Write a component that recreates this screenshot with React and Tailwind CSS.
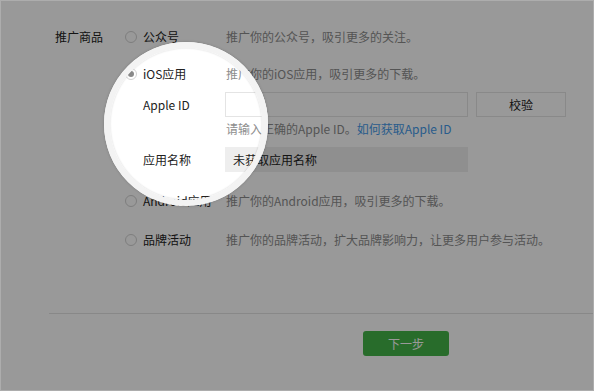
import React from "react";

function Radio({ checked }) {
  return (
    <span className="flex h-[12px] w-[12px] shrink-0 items-center justify-center rounded-full border border-[#d2d2d2] bg-white">
      {checked && <span className="h-[6px] w-[6px] rounded-full bg-[#8a8a8a]" />}
    </span>
  );
}

function OptionRow({ label, name, desc, checked, className = "" }) {
  return (
    <div className={`flex h-[18px] items-center ${className}`}>
      <span className="w-[70px] shrink-0">{label}</span>
      <Radio checked={checked} />
      <span className="ml-[6px] w-[83px] shrink-0">{name}</span>
      <span className="text-[#8d8d8d]">{desc}</span>
    </div>
  );
}

function Form() {
  return (
    <div className="h-[391px] w-[594px] bg-white font-['Noto_Sans_CJK_SC','Noto_Sans',sans-serif] text-[12px] leading-[18px] text-[#222]">
      <div className="pt-[28px] pl-[55px]">
        <OptionRow label="推广商品" name="公众号" desc="推广你的公众号，吸引更多的关注。" />
        <OptionRow className="mt-[19px]" checked name="iOS应用" desc="推广你的iOS应用，吸引更多的下载。" />
        <div className="mt-[9px] flex h-[25px] items-center pl-[88px]">
          <span className="w-[82px] shrink-0">Apple ID</span>
          <div className="h-[25px] w-[243px] shrink-0 border border-[#e4e4e4] bg-white" />
          <div className="ml-[8px] flex h-[25px] w-[90px] shrink-0 items-center justify-center border border-[#e4e4e4] bg-white">
            校验
          </div>
        </div>
        <div className="mt-[3px] h-[18px] pl-[171px] text-[#8d8d8d]">
          请输入正确的Apple ID。<span className="text-[#459ae9]">如何获取Apple ID</span>
        </div>
        <div className="mt-[9px] flex h-[25px] items-center pl-[88px]">
          <span className="w-[82px] shrink-0">应用名称</span>
          <div className="flex h-[25px] w-[243px] shrink-0 items-center bg-[#eeeeee] pl-[8px]">未获取应用名称</div>
        </div>
        <OptionRow className="mt-[20px]" name="Android应用" desc="推广你的Android应用，吸引更多的下载。" />
        <OptionRow className="mt-[21px]" name="品牌活动" desc="推广你的品牌活动，扩大品牌影响力，让更多用户参与活动。" />
        <div className="mt-[64px] ml-[-6px] border-t border-[#e3e3e3]" />
        <div className="mt-[17px] ml-[308px] flex h-[25px] w-[86px] items-center justify-center rounded-[3px] bg-[#44b549] text-white">
          下一步
        </div>
      </div>
    </div>
  );
}

export default function App() {
  return (
    <div className="relative h-[391px] w-[594px] overflow-hidden">
      <Form />
      <div className="absolute inset-0 border border-[#adadad] bg-black/40" />
      <div className="absolute top-[42px] left-[104px] h-[164px] w-[164px] overflow-hidden rounded-full">
        <div className="absolute top-[-42px] left-[-104px]">
          <Form />
        </div>
      </div>
      <div className="absolute top-[42px] left-[104px] h-[164px] w-[164px] rounded-full border-[6px] border-[#f3f3f3] shadow-[inset_0_0_2px_rgba(0,0,0,0.18),0_0_3px_rgba(0,0,0,0.2)]" />
    </div>
  );
}
